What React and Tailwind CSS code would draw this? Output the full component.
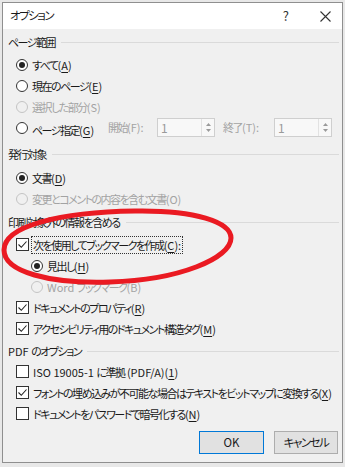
import React from "react";

const FONT = "font-['Noto_Sans_CJK_JP','Noto_Sans',sans-serif] [font-feature-settings:'palt']";

function T({ text }) {
  const parts = text.split(/([\u3000-\u30ff\u4e00-\u9fff\uff00-\uffef]+)/);
  return (
    <>
      {parts.map((p, i) =>
        p === "" ? null : /[\u3000-\u30ff\u4e00-\u9fff\uff00-\uffef]/.test(p) ? (
          <span key={i} className="tracking-[-1.5px]">{p}</span>
        ) : (
          <span key={i}>{p}</span>
        )
      )}
    </>
  );
}

function Label({ pre, k, post = ")", disabled, focus }) {
  return (
    <span
      className={`whitespace-nowrap text-[11px] leading-[14px] ${disabled ? "text-[#a3a3a3]" : "text-[#1a1a1a]"} ${focus ? "outline outline-1 outline-dotted outline-[#333] outline-offset-[1px]" : ""}`}
    >
      <T text={pre} />
      {k && <span className="underline underline-offset-[2px]">{k}</span>}
      {post}
    </span>
  );
}

function Radio({ checked, disabled }) {
  return (
    <span
      className={`flex h-[12px] w-[12px] shrink-0 items-center justify-center rounded-full border ${disabled ? "border-[#c4c4c4] bg-[#f0f0f0]" : "border-[#333] bg-white"}`}
    >
      {checked && <span className="h-[6px] w-[6px] rounded-full bg-[#222]" />}
    </span>
  );
}

function Check({ checked }) {
  return (
    <span className="flex h-[13px] w-[13px] shrink-0 items-center justify-center border border-[#333] bg-white">
      {checked && (
        <svg width="11" height="11" viewBox="0 0 11 11">
          <path d="M1.5 5.5 L4.3 8.3 L9.5 2.5" fill="none" stroke="#222" strokeWidth="1.1" />
        </svg>
      )}
    </span>
  );
}

function Row({ children, pl = "pl-[13px]", gap = "gap-[4px]" }) {
  return <div className={`flex h-[21px] items-center ${pl} ${gap}`}>{children}</div>;
}

function Heading({ text, className = "" }) {
  return (
    <div className={`flex h-[20px] items-center pl-[5px] pr-[3px] ${className}`}>
      <span className="whitespace-nowrap text-[11px] leading-[14px] text-[#1a1a1a]"><T text={text} /></span>
      <span className="ml-[6px] h-px flex-1 bg-[#dadada]" />
    </div>
  );
}

function Spin() {
  return (
    <div className="flex h-[19px] w-[58px] border border-[#cfcfcf] bg-[#f8f8f8]">
      <span className="flex-1 pl-[3px] text-[12px] leading-[17px] text-[#9a9a9a]">1</span>
      <span className="flex w-[13px] flex-col items-center justify-center gap-[3px] border-l border-[#e2e2e2]">
        <svg width="5" height="3" viewBox="0 0 5 3"><path d="M0 3 L2.5 0 L5 3 Z" fill="#9a9a9a" /></svg>
        <svg width="5" height="3" viewBox="0 0 5 3"><path d="M0 0 L2.5 3 L5 0 Z" fill="#9a9a9a" /></svg>
      </span>
    </div>
  );
}

export default function App() {
  return (
    <div className={`relative h-[467px] w-[345px] bg-[#e8e8e8] p-[2px] ${FONT}`}>
      <div className="flex h-[461px] flex-col border border-[#8f8f8f] bg-[#f0f0f0]">
        <div className="flex h-[26px] items-center bg-white pl-[7px]">
          <span className="text-[11.5px] text-[#1a1a1a]"><T text="オプション" /></span>
          <span className="ml-auto mr-[31px] text-[13px] text-[#333]">?</span>
          <svg className="mr-[11px]" width="11" height="11" viewBox="0 0 11 11">
            <path d="M0.5 0.5 L10.5 10.5 M10.5 0.5 L0.5 10.5" stroke="#333" strokeWidth="1.1" />
          </svg>
        </div>

        <Heading text="ページ範囲" className="mt-[3px] mb-[2px]" />
        <Row><Radio checked /><Label pre="すべて(" k="A" /></Row>
        <Row><Radio /><Label pre="現在のページ(" k="E" /></Row>
        <Row><Radio disabled /><Label pre="選択した部分(S)" k="" post="" disabled /></Row>
        <Row gap="gap-0">
          <Radio />
          <span className="ml-[4px] w-[76px]"><Label pre="ページ指定(" k="G" /></span>
          <span className="w-[49px] whitespace-nowrap text-[11px] text-[#a3a3a3]"><T text="開始(F):" /></span>
          <Spin />
          <span className="ml-[8px] w-[51px] whitespace-nowrap text-[11px] text-[#a3a3a3]"><T text="終了(T):" /></span>
          <Spin />
        </Row>

        <Heading text="発行対象" className="mt-[6px] mb-[3px]" />
        <Row><Radio checked /><Label pre="文書(" k="D" /></Row>
        <Row><Radio disabled /><Label pre="変更とコメントの内容を含む文書(O)" k="" post="" disabled /></Row>

        <Heading text="印刷対象外の情報を含める" className="mt-[3px] mb-[2px]" />
        <Row gap="gap-[4px]"><Check checked /><Label pre="次を使用してブックマークを作成(" k="C" post="):" focus /></Row>
        <Row pl="pl-[28px]"><Radio checked /><Label pre="見出し(" k="H" /></Row>
        <Row pl="pl-[28px]"><Radio disabled /><Label pre="Word ブックマーク(B)" k="" post="" disabled /></Row>
        <Row><Check checked /><Label pre="ドキュメントのプロパティ(" k="R" /></Row>
        <Row><Check checked /><Label pre="アクセシビリティ用のドキュメント構造タグ(" k="M" /></Row>

        <Heading text="PDF のオプション" className="mt-[2px]" />
        <Row><Check /><Label pre="ISO 19005-1 に準拠 (PDF/A)(" k="1" /></Row>
        <Row><Check checked /><Label pre="フォントの埋め込みが不可能な場合はテキストをビットマップに変換する(" k="X" /></Row>
        <Row><Check /><Label pre="ドキュメントをパスワードで暗号化する(" k="N" /></Row>

        <div className="mt-[7px] flex justify-end gap-[10px] pr-[4px]">
          <button className="h-[23px] w-[65px] border border-[#0078d7] bg-[#e1e1e1] text-[11.5px] text-[#1a1a1a]">OK</button>
          <button className="h-[23px] w-[64px] border border-[#adadad] bg-[#e1e1e1] text-[11.5px] text-[#1a1a1a]"><T text="キャンセル" /></button>
        </div>
      </div>

      <svg className="pointer-events-none absolute left-0 top-0" width="345" height="467" viewBox="0 0 345 467">
        <path
          d="M4 250 C 4 226, 60 212, 135 211 C 195 210, 231 222, 231 238 C 231 258, 180 280, 110 282 C 50 284, 4 272, 4 250 Z"
          fill="none"
          stroke="#ea1a22"
          strokeWidth="5"
        />
      </svg>
    </div>
  );
}
